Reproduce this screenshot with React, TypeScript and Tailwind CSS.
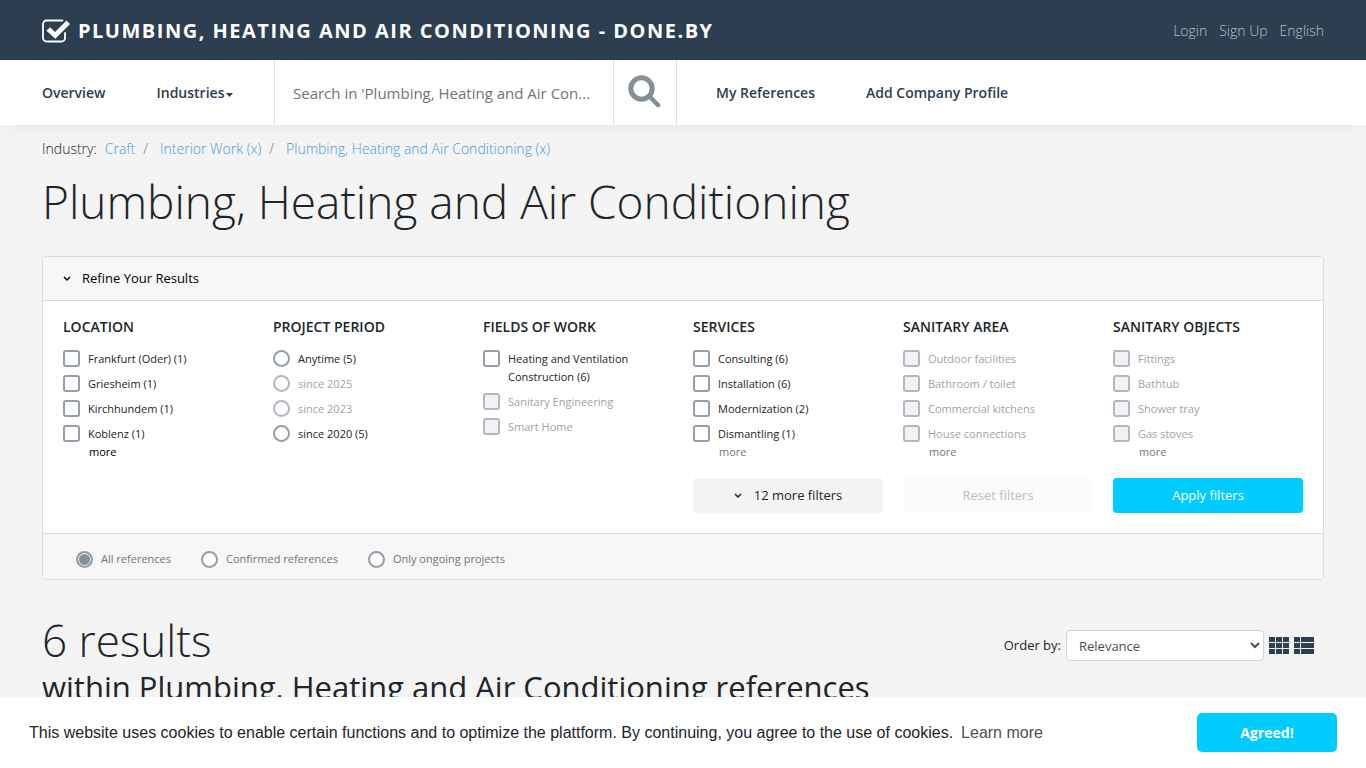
import { useState } from "react";

type Option = { label: string; disabled?: boolean };
type FilterGroup = {
  title: string;
  kind: "checkbox" | "radio";
  options: Option[];
  more?: "dark" | "gray";
};

const off = (label: string): Option => ({ label, disabled: true });

const groups: FilterGroup[] = [
  {
    title: "Location",
    kind: "checkbox",
    options: [
      { label: "Frankfurt (Oder) (1)" },
      { label: "Griesheim (1)" },
      { label: "Kirchhundem (1)" },
      { label: "Koblenz (1)" },
    ],
    more: "dark",
  },
  {
    title: "Project period",
    kind: "radio",
    options: [{ label: "Anytime (5)" }, off("since 2025"), off("since 2023"), { label: "since 2020 (5)" }],
  },
  {
    title: "Fields of work",
    kind: "checkbox",
    options: [{ label: "Heating and Ventilation Construction (6)" }, off("Sanitary Engineering"), off("Smart Home")],
  },
  {
    title: "Services",
    kind: "checkbox",
    options: [
      { label: "Consulting (6)" },
      { label: "Installation (6)" },
      { label: "Modernization (2)" },
      { label: "Dismantling (1)" },
    ],
    more: "gray",
  },
  {
    title: "Sanitary area",
    kind: "checkbox",
    options: [off("Outdoor facilities"), off("Bathroom / toilet"), off("Commercial kitchens"), off("House connections")],
    more: "gray",
  },
  {
    title: "Sanitary objects",
    kind: "checkbox",
    options: [off("Fittings"), off("Bathtub"), off("Shower tray"), off("Gas stoves")],
    more: "gray",
  },
];

const scopes = ["All references", "Confirmed references", "Only ongoing projects"];

function Logo() {
  return (
    <svg viewBox="0 0 28 24" className="h-6 w-7 shrink-0" fill="none" aria-hidden="true">
      <path
        d="M20.500 1.500H4.500a3.500 3.500 0 0 0-3.500 3.500v14a3.500 3.500 0 0 0 3.500 3.500h15a3.500 3.500 0 0 0 3.500-3.500v-5"
        stroke="#fff"
        strokeWidth="1.800"
        strokeLinecap="round"
      />
      <path d="M4.500 11.800L8 8.300l5 4.700L24.500 1.500 28 5 13.300 19.800z" fill="#fff" />
    </svg>
  );
}

function SearchIcon() {
  return (
    <svg viewBox="0 0 33 33" className="size-[33px]" fill="none" stroke="#868e96" aria-hidden="true">
      <circle cx="13.500" cy="13.500" r="10.700" strokeWidth="5" />
      <path d="M21 21l9 9" strokeWidth="4.500" strokeLinecap="round" />
    </svg>
  );
}

function Chevron() {
  return (
    <svg viewBox="0 0 8 6" className="h-1.5 w-2 shrink-0" fill="none" stroke="currentColor" strokeWidth="1.500" aria-hidden="true">
      <path d="M1 1l3 3 3-3" />
    </svg>
  );
}

function GridIcon() {
  return (
    <svg viewBox="0 0 20 17" className="h-[17px] w-5" fill="#2c3e50" shapeRendering="crispEdges" aria-hidden="true">
      {[0, 6, 12].map((y) => (
        <g key={y}>
          <rect x="0" y={y} width="6" height="5" />
          <rect x="7" y={y} width="6" height="5" />
          <rect x="14" y={y} width="6" height="5" />
        </g>
      ))}
    </svg>
  );
}

function ListIcon() {
  return (
    <svg viewBox="0 0 20 17" className="h-[17px] w-5" fill="#2c3e50" shapeRendering="crispEdges" aria-hidden="true">
      {[0, 6, 12].map((y) => (
        <g key={y}>
          <rect x="0" y={y} width="6" height="5" />
          <rect x="7" y={y} width="13" height="5" />
        </g>
      ))}
    </svg>
  );
}

const boxStyle =
  "size-[17px] shrink-0 appearance-none border-2 border-[#959eaa] bg-white disabled:border-[#b2b8c0]";

function FilterColumn({ group }: { group: FilterGroup }) {
  return (
    <fieldset className="min-w-0">
      <legend className="text-[14px] leading-5 font-semibold uppercase">{group.title}</legend>
      <div className="mt-[13px] flex flex-col gap-[7px]">
        {group.options.map((option) => (
          <label
            key={option.label}
            className={
              "flex items-start gap-2 text-[11px] leading-[18px] " + (option.disabled ? "text-[#a3a3a3]" : "text-[#212529]")
            }
          >
            <input
              type={group.kind}
              name={group.title}
              disabled={option.disabled}
              className={
                boxStyle + (group.kind === "radio" ? " rounded-full" : " rounded-[3px] disabled:bg-[#f0f2f5]")
              }
            />
            <span>{option.label}</span>
          </label>
        ))}
      </div>
      {group.more && (
        <button
          type="button"
          className={"ml-[26px] block text-[11px] leading-[18px] " + (group.more === "dark" ? "text-black" : "text-[#777]")}
        >
          more
        </button>
      )}
    </fieldset>
  );
}

export default function App() {
  const [scope, setScope] = useState(scopes[0]);

  return (
    <div className="min-h-screen bg-[#f4f4f4] font-['Open_Sans','Noto_Sans',sans-serif] text-[13px] text-[#212529]">
      <header className="flex h-[60px] items-center justify-between bg-[#2c3e50] px-[42px]">
        <a href="#home" className="flex items-center gap-2 pt-0.5 text-white">
          <Logo />
          <span className="text-[20px] leading-6 font-bold tracking-[1.500px] uppercase">
            Plumbing, Heating and Air Conditioning - done.by
          </span>
        </a>
        <nav className="flex gap-3 text-[14px] font-light text-[#b9c0c7]" aria-label="Account">
          <a href="#login">Login</a>
          <a href="#signup">Sign Up</a>
          <a href="#language">English</a>
        </nav>
      </header>

      <nav
        className="flex h-[65px] items-stretch bg-white pl-[42px] text-[14px] font-semibold text-[#2c3e50] shadow-[0_10px_20px_-8px_rgba(0,0,0,0.06)]"
        aria-label="Main"
      >
        <div className="flex w-[232px] items-center gap-[51px]">
          <a href="#overview">Overview</a>
          <button type="button" className="flex items-center gap-0.5">
            Industries
            <svg viewBox="0 0 7 4" className="mt-1 h-1 w-[7px]" fill="currentColor" aria-hidden="true">
              <path d="M0 0h7L3.500 4z" />
            </svg>
          </button>
        </div>
        <form className="mb-px flex border-x border-[#dee0e2]" onSubmit={(e) => e.preventDefault()}>
          <input
            type="text"
            aria-label="Search"
            placeholder="Search in 'Plumbing, Heating and Air Con..."
            className="w-[338px] pt-0.5 pl-[18px] text-[15px] font-medium outline-none placeholder:text-[#6c757d]"
          />
          <button
            type="submit"
            aria-label="Search"
            className="flex w-[63px] items-center justify-center border-l border-[#dee0e2] pr-0.5 pb-0.5"
          >
            <SearchIcon />
          </button>
        </form>
        <div className="flex items-center gap-[51px] pl-[39px]">
          <a href="#references">My References</a>
          <a href="#company">Add Company Profile</a>
        </div>
      </nav>

      <main className="px-[42px] pt-3">
        <nav className="flex text-[14px] leading-6 font-light text-[#3d9be6]" aria-label="Breadcrumb">
          <span className="mr-2 text-[#212529]">Industry:</span>
          <a href="#craft">Craft</a>
          <span className="mr-3 ml-2 text-[#6c757d]">/</span>
          <a href="#interior">Interior Work (x)</a>
          <span className="mr-3 ml-2 text-[#6c757d]">/</span>
          <a href="#plumbing">Plumbing, Heating and Air Conditioning (x)</a>
        </nav>

        <h1 className="mt-3 text-[46px] leading-[56px] font-light">Plumbing, Heating and Air Conditioning</h1>

        <section className="mt-[27px] rounded border border-[#dbdcdd] bg-white">
          <button
            type="button"
            className="flex h-11 w-full items-center gap-[11px] rounded-t border-b border-[#d9d9d9] bg-[#f7f7f7] px-5 text-black"
          >
            <Chevron />
            Refine Your Results
          </button>
          <div className="px-5 pt-4 pb-5">
            <div className="grid grid-cols-6 gap-5">
              {groups.map((group) => (
                <FilterColumn key={group.title} group={group} />
              ))}
            </div>
            <div className="mt-[17px] grid grid-cols-6 gap-5">
              <button
                type="button"
                className="col-start-4 flex h-[35px] items-center justify-center gap-3 rounded bg-[#f4f4f4]"
              >
                <Chevron />
                12 more filters
              </button>
              <button type="button" disabled className="h-[35px] rounded bg-[#fbfbfb] text-[#bcbdbe]">
                Reset filters
              </button>
              <button type="button" className="h-[35px] rounded bg-[#00ccff] text-white">
                Apply filters
              </button>
            </div>
          </div>
          <div className="flex h-[46px] items-center gap-[30px] rounded-b border-t border-[#d9d9d9] bg-[#f7f7f7] px-[33px] pt-[5px]">
            {scopes.map((label) => (
              <label key={label} className="flex items-center gap-2 text-[11px] leading-[18px] text-[#6c757d]">
                <input
                  type="radio"
                  name="scope"
                  checked={scope === label}
                  onChange={() => setScope(label)}
                  className={
                    boxStyle + " rounded-full checked:bg-[#868e96] checked:shadow-[inset_0_0_0_1px_#fff]"
                  }
                />
                {label}
              </label>
            ))}
          </div>
        </section>

        <section className="mt-8 flex items-start justify-between">
          <div>
            <h2 className="text-[44px] leading-[56px] font-light">6 results</h2>
            <p className="text-[31px] leading-[38px]">within Plumbing, Heating and Air Conditioning references</p>
          </div>
          <div className="mt-[18px] mr-[10px] flex items-center gap-[5px]">
            <label htmlFor="order">Order by:</label>
            <select
              id="order"
              className="h-[31px] w-[198px] rounded border border-[#ced4da] bg-white px-2 text-[13px] text-[#495057]"
            >
              <option>Relevance</option>
              <option>Date</option>
            </select>
            <button type="button" aria-label="Grid view">
              <GridIcon />
            </button>
            <button type="button" aria-label="List view">
              <ListIcon />
            </button>
          </div>
        </section>
      </main>

      <aside
        className="fixed inset-x-0 bottom-0 flex h-[71px] items-center justify-between bg-white px-[29px] font-['Liberation_Sans',sans-serif] text-[16px]"
        aria-label="Cookie notice"
      >
        <p>
          This website uses cookies to enable certain functions and to optimize the plattform. By continuing, you agree to
          the use of cookies.
          <a href="#cookies" className="ml-2 text-[#4d5154]">
            Learn more
          </a>
        </p>
        <button
          type="button"
          className="h-[39px] w-[140px] rounded-[5px] bg-[#00ccff] font-['Open_Sans','Noto_Sans',sans-serif] text-[14px] font-bold text-white"
        >
          Agreed!
        </button>
      </aside>
    </div>
  );
}
